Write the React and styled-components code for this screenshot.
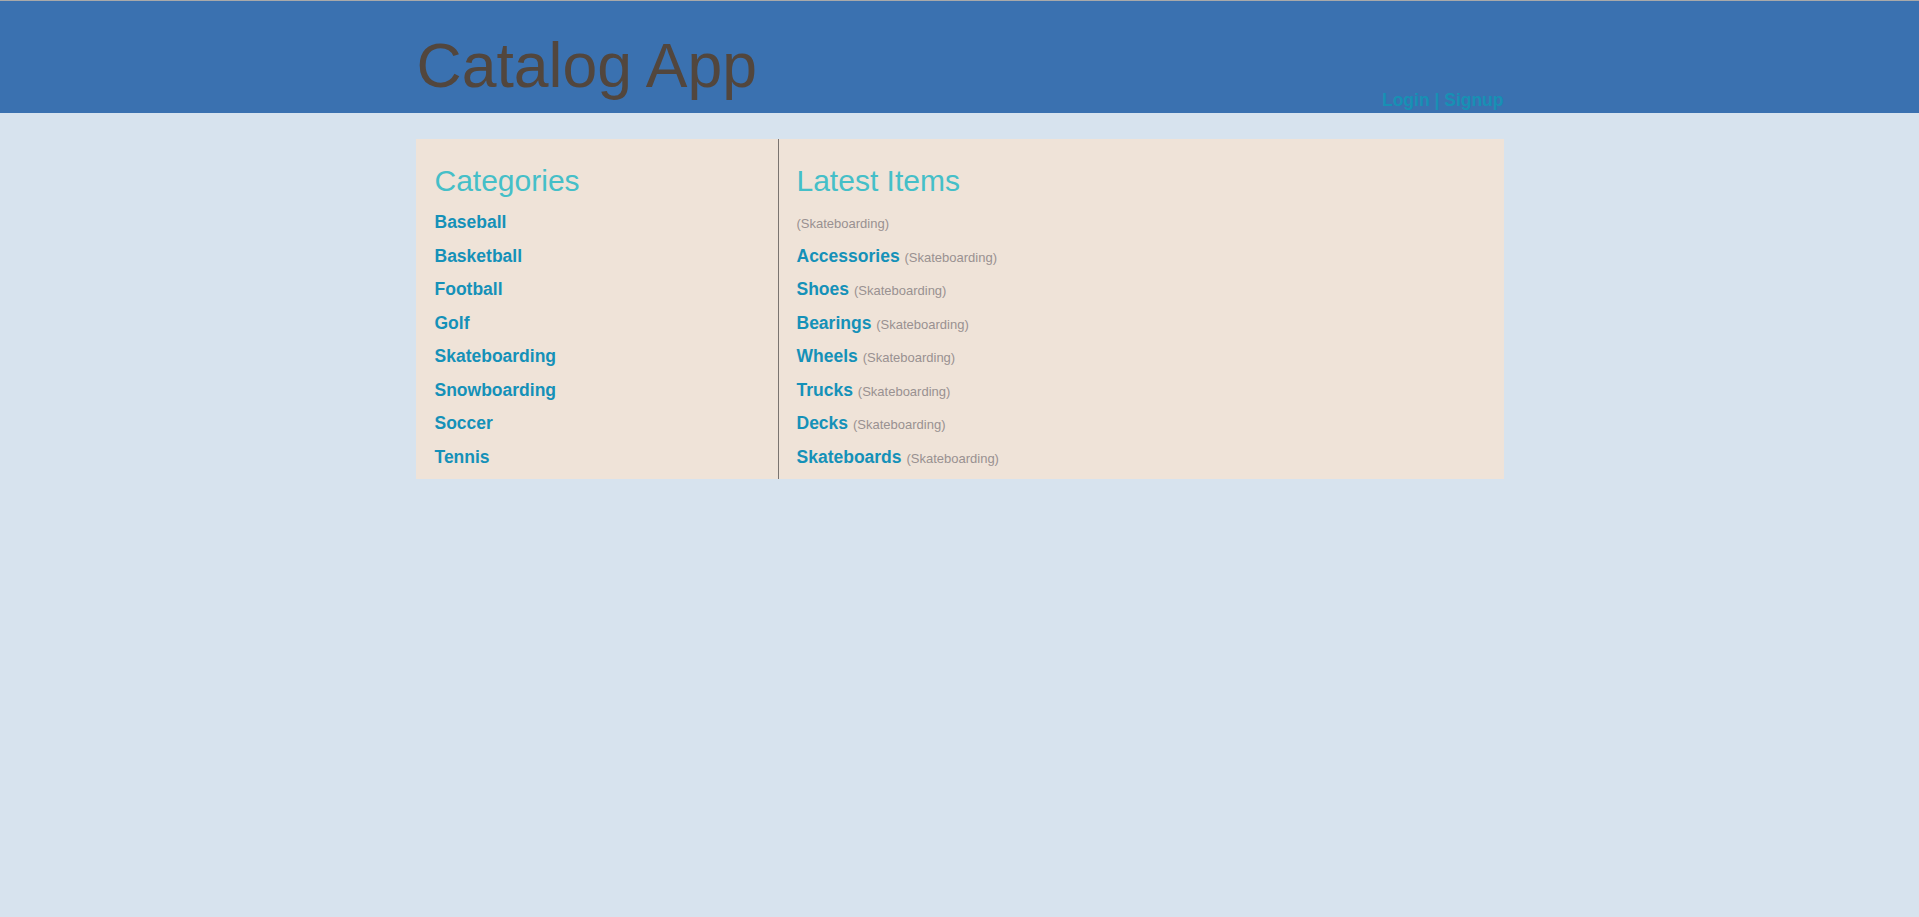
import React from "react"
import styled, { createGlobalStyle } from "styled-components"

const GlobalStyle = createGlobalStyle`
  *, *::before, *::after {
    box-sizing: border-box;
  }
  html, body {
    margin: 0;
    padding: 0;
    background: #d7e3ee;
    font-family: "Liberation Sans", Arial, sans-serif;
  }
`

const categories = [
  "Baseball",
  "Basketball",
  "Football",
  "Golf",
  "Skateboarding",
  "Snowboarding",
  "Soccer",
  "Tennis",
]

const latestItems = [
  { name: "", category: "Skateboarding" },
  { name: "Accessories", category: "Skateboarding" },
  { name: "Shoes", category: "Skateboarding" },
  { name: "Bearings", category: "Skateboarding" },
  { name: "Wheels", category: "Skateboarding" },
  { name: "Trucks", category: "Skateboarding" },
  { name: "Decks", category: "Skateboarding" },
  { name: "Skateboards", category: "Skateboarding" },
]

export default function App() {
  return (
    <>
      <GlobalStyle />
      <Header>
        <HeaderInner>
          <Title>Catalog App</Title>
          <Auth>
            <AuthLink href="#">Login</AuthLink> | <AuthLink href="#">Signup</AuthLink>
          </Auth>
        </HeaderInner>
      </Header>

      <Panel>
        <Column $width="363px" $divider>
          <Heading>Categories</Heading>
          {categories.map((c) => (
            <Row key={c}>
              <ItemLink href="#">{c}</ItemLink>
            </Row>
          ))}
        </Column>
        <Column $pad="18px">
          <Heading>Latest Items</Heading>
          {latestItems.map((item, i) => (
            <Row key={i}>
              {item.name && <ItemLink href="#">{item.name}</ItemLink>}
              {item.name && " "}
              <Category>({item.category})</Category>
            </Row>
          ))}
        </Column>
      </Panel>
    </>
  )
}

const Header = styled.header`
  height: 113px;
  border-top: 1px solid #a9a9a9;
  background: #3a71b0;
`

const HeaderInner = styled.div`
  width: 1088px;
  height: 100%;
  margin: 0 auto;
  display: flex;
  justify-content: space-between;
  align-items: flex-end;
`

const Title = styled.h1`
  align-self: flex-start;
  margin: 28px 0 0 1px;
  font-size: 62.5px;
  font-weight: normal;
  line-height: normal;
  color: #52463d;
`

const Auth = styled.div`
  margin-bottom: 2px;
  font-size: 17.5px;
  font-weight: bold;
  color: #1790b4;
`

const AuthLink = styled.a`
  color: #1790b4;
  text-decoration: none;
`

const Panel = styled.main`
  width: 1088px;
  margin: 26px auto 0;
  display: flex;
  background: #efe3d8;
`

const Column = styled.section`
  width: ${(p) => p.$width || "auto"};
  flex: ${(p) => (p.$width ? "none" : "1")};
  padding: 25px 0 5px ${(p) => p.$pad || "19px"};
  border-right: ${(p) => (p.$divider ? "1px solid #7a7470" : "none")};
`

const Heading = styled.h2`
  margin: 0 0 8px;
  font-size: 30px;
  font-weight: normal;
  line-height: normal;
  color: #45bfc8;
`

const Row = styled.div`
  font-size: 17.5px;
  line-height: 33.5px;
  height: 33.5px;
`

const ItemLink = styled.a`
  font-weight: bold;
  color: #1591b8;
  text-decoration: none;
`

const Category = styled.span`
  font-size: 13px;
  line-height: normal;
  color: #999191;
`
